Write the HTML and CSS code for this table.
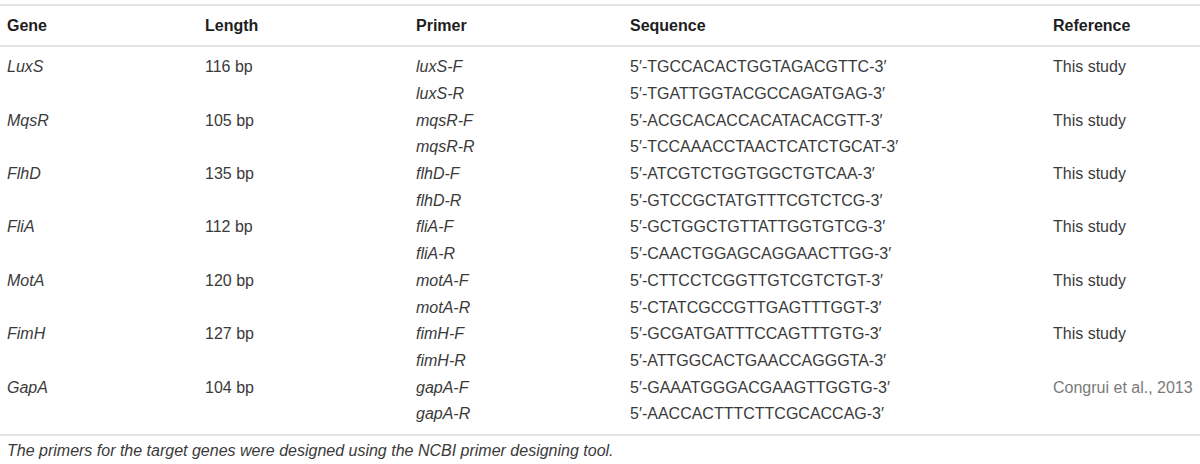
FILE: index.html
```html
<!DOCTYPE html>
<html>
<head>
<meta charset="utf-8">
<link rel="stylesheet" href="styles.css">
</head>
<body>
<div class="wrap">
<table class="primers">
  <colgroup>
    <col class="c-gene"><col class="c-len"><col class="c-primer"><col class="c-seq"><col class="c-ref">
  </colgroup>
  <thead>
    <tr><th>Gene</th><th>Length</th><th>Primer</th><th>Sequence</th><th>Reference</th></tr>
  </thead>
  <tbody>
    <tr class="first"><td><i>LuxS</i></td><td>116 bp</td><td><i>luxS-F</i></td><td>5′-TGCCACACTGGTAGACGTTC-3′</td><td>This study</td></tr>
    <tr><td></td><td></td><td><i>luxS-R</i></td><td>5′-TGATTGGTACGCCAGATGAG-3′</td><td></td></tr>
    <tr><td><i>MqsR</i></td><td>105 bp</td><td><i>mqsR-F</i></td><td>5′-ACGCACACCACATACACGTT-3′</td><td>This study</td></tr>
    <tr><td></td><td></td><td><i>mqsR-R</i></td><td>5′-TCCAAACCTAACTCATCTGCAT-3′</td><td></td></tr>
    <tr><td><i>FlhD</i></td><td>135 bp</td><td><i>flhD-F</i></td><td>5′-ATCGTCTGGTGGCTGTCAA-3′</td><td>This study</td></tr>
    <tr><td></td><td></td><td><i>flhD-R</i></td><td>5′-GTCCGCTATGTTTCGTCTCG-3′</td><td></td></tr>
    <tr><td><i>FliA</i></td><td>112 bp</td><td><i>fliA-F</i></td><td>5′-GCTGGCTGTTATTGGTGTCG-3′</td><td>This study</td></tr>
    <tr><td></td><td></td><td><i>fliA-R</i></td><td>5′-CAACTGGAGCAGGAACTTGG-3′</td><td></td></tr>
    <tr><td><i>MotA</i></td><td>120 bp</td><td><i>motA-F</i></td><td>5′-CTTCCTCGGTTGTCGTCTGT-3′</td><td>This study</td></tr>
    <tr><td></td><td></td><td><i>motA-R</i></td><td>5′-CTATCGCCGTTGAGTTTGGT-3′</td><td></td></tr>
    <tr><td><i>FimH</i></td><td>127 bp</td><td><i>fimH-F</i></td><td>5′-GCGATGATTTCCAGTTTGTG-3′</td><td>This study</td></tr>
    <tr><td></td><td></td><td><i>fimH-R</i></td><td>5′-ATTGGCACTGAACCAGGGTA-3′</td><td></td></tr>
    <tr><td><i>GapA</i></td><td>104 bp</td><td><i>gapA-F</i></td><td>5′-GAAATGGGACGAAGTTGGTG-3′</td><td class="cite">Congrui et al., 2013</td></tr>
    <tr class="last"><td></td><td></td><td><i>gapA-R</i></td><td>5′-AACCACTTTCTTCGCACCAG-3′</td><td></td></tr>
  </tbody>
</table>
<p class="note">The primers for the target genes were designed using the NCBI primer designing tool.</p>
</div>
</body>
</html>
```
FILE: styles.css
```css
html, body {
  margin: 0;
  padding: 0;
  background: #ffffff;
}
body {
  font-family: "Liberation Sans", Arial, sans-serif;
  font-size: 16px;
  color: #3a3a3a;
}
.wrap {
  padding-top: 4px;
}
.primers {
  width: 100%;
  border-collapse: collapse;
  table-layout: fixed;
  border-top: 2px solid #e2e2e2;
  border-bottom: 2px solid #e2e2e2;
}
.c-gene { width: 205px; }
.c-len { width: 211px; }
.c-primer { width: 214px; }
.c-seq { width: 423px; }
.primers th {
  text-align: left;
  font-weight: bold;
  color: #1e1e1e;
  height: 39px;
  padding: 0;
  vertical-align: middle;
  border-bottom: 2px solid #e2e2e2;
}
.primers td {
  padding: 0;
  height: 26.7px;
  line-height: 18px;
  vertical-align: middle;
  white-space: nowrap;
}
.primers th:first-child,
.primers td:first-child {
  padding-left: 7px;
}
.primers tr.first td {
  padding-top: 7px;
}
.primers tr.last td {
  padding-bottom: 6px;
}
.primers td.cite {
  color: #7a7a7a;
}
.note {
  margin: 6px 0 0 7px;
  font-style: italic;
  font-size: 16px;
  color: #3a3a3a;
}
```
